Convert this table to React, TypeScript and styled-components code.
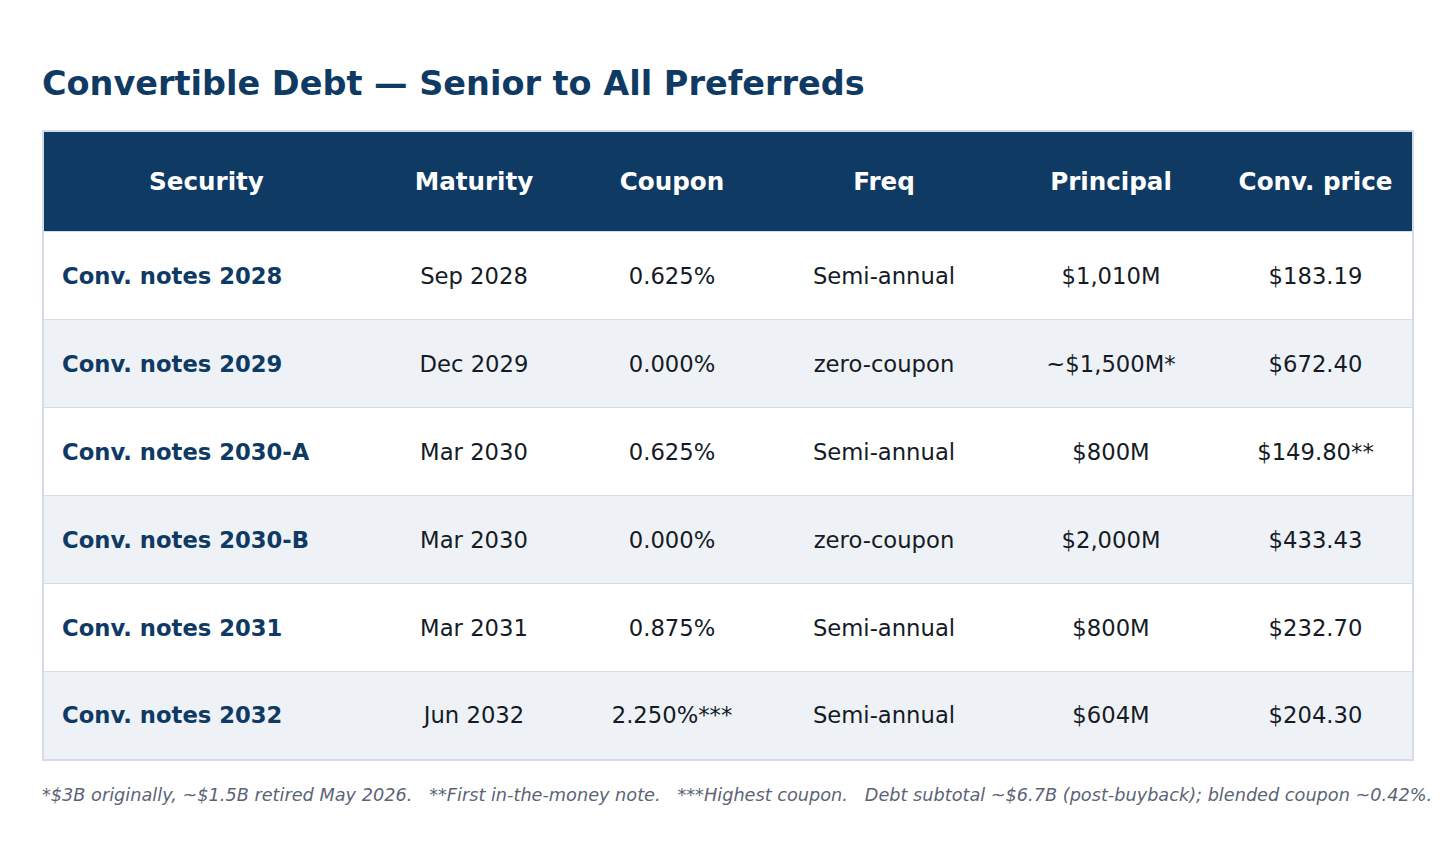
import styled, { createGlobalStyle } from "styled-components";

const GlobalStyle = createGlobalStyle`
  html, body {
    margin: 0;
    padding: 0;
    background: #ffffff;
    font-family: "DejaVu Sans", "Liberation Sans", sans-serif;
  }
`;

const Page = styled.div`
  padding: 64px 42px 40px 42px;
`;

const Title = styled.h1`
  margin: 0 0 26px 0;
  font-size: 33.5px;
  font-weight: 700;
  line-height: 40px;
  color: #0f3a64;
`;

const Table = styled.table`
  width: 1372px;
  border-collapse: collapse;
  table-layout: fixed;
  border: 2px solid #d3dce8;
`;

const HeadCell = styled.th`
  height: 99px;
  padding: 0;
  background: #0f3a64;
  color: #ffffff;
  font-size: 24.6px;
  font-weight: 700;
  text-align: center;
`;

const Row = styled.tr<{ $alt: boolean }>`
  height: 88px;
  background: ${(p) => (p.$alt ? "#eef2f7" : "#ffffff")};
  border-top: 1px solid #d3dce8;
`;

const Cell = styled.td`
  padding: 0;
  font-size: 22.7px;
  color: #151b26;
  text-align: center;
`;

const NameCell = styled.td`
  padding: 0 0 0 18px;
  font-size: 22.7px;
  font-weight: 700;
  color: #0f3a64;
  text-align: left;
`;

const Footnote = styled.p`
  margin: 23px 0 0 0;
  font-size: 17.7px;
  line-height: 22px;
  font-style: italic;
  color: #5b6476;
  white-space: pre;
`;

const widths = [326, 210, 186, 238, 216, 194];
const headers = ["Security", "Maturity", "Coupon", "Freq", "Principal", "Conv. price"];

const rows = [
  ["Conv. notes 2028", "Sep 2028", "0.625%", "Semi-annual", "$1,010M", "$183.19"],
  ["Conv. notes 2029", "Dec 2029", "0.000%", "zero-coupon", "~$1,500M*", "$672.40"],
  ["Conv. notes 2030-A", "Mar 2030", "0.625%", "Semi-annual", "$800M", "$149.80**"],
  ["Conv. notes 2030-B", "Mar 2030", "0.000%", "zero-coupon", "$2,000M", "$433.43"],
  ["Conv. notes 2031", "Mar 2031", "0.875%", "Semi-annual", "$800M", "$232.70"],
  ["Conv. notes 2032", "Jun 2032", "2.250%***", "Semi-annual", "$604M", "$204.30"],
];

export default function App() {
  return (
    <Page>
      <GlobalStyle />
      <Title>Convertible Debt — Senior to All Preferreds</Title>
      <Table>
        <colgroup>
          {widths.map((w, i) => (
            <col key={i} style={{ width: w }} />
          ))}
        </colgroup>
        <thead>
          <tr>
            {headers.map((h) => (
              <HeadCell key={h}>{h}</HeadCell>
            ))}
          </tr>
        </thead>
        <tbody>
          {rows.map((r, i) => (
            <Row key={r[0]} $alt={i % 2 === 1}>
              <NameCell>{r[0]}</NameCell>
              {r.slice(1).map((v, j) => (
                <Cell key={j}>{v}</Cell>
              ))}
            </Row>
          ))}
        </tbody>
      </Table>
      <Footnote>
        {"*$3B originally, ~$1.5B retired May 2026.   **First in-the-money note.   ***Highest coupon.   Debt subtotal ~$6.7B (post-buyback); blended coupon ~0.42%."}
      </Footnote>
    </Page>
  );
}
